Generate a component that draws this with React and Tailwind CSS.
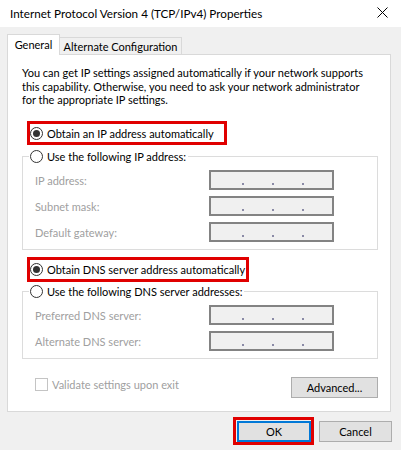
import React from "react";

function Radio({ checked }) {
  return (
    <span className="flex h-[13px] w-[13px] shrink-0 items-center justify-center rounded-full border border-[#333333] bg-white">
      {checked && <span className="h-[7px] w-[7px] rounded-full bg-[#333333]" />}
    </span>
  );
}

function IpBox() {
  return (
    <div className="relative h-[20px] w-[125px] border-2 border-[#838383] bg-[#f0f0f0]">
      <span className="absolute left-[31px] top-[11px] h-[2px] w-[2px] bg-[#8a8aa6]" />
      <span className="absolute left-[61px] top-[11px] h-[2px] w-[2px] bg-[#8a8aa6]" />
      <span className="absolute left-[91px] top-[11px] h-[2px] w-[2px] bg-[#8a8aa6]" />
    </div>
  );
}

function FieldRow({ label }) {
  return (
    <div className="flex h-[20px] items-center">
      <span className="w-[180px] whitespace-nowrap pl-[6px] text-[#a0a0a0]">{label}</span>
      <IpBox />
    </div>
  );
}

export default function App() {
  return (
    <div
      className="h-[450px] w-[401px] overflow-hidden whitespace-nowrap bg-[#f0f0f0] text-[11px] leading-[15px] text-black"
      style={{ fontFamily: 'Lato, "Noto Sans", sans-serif' }}
    >
      {/* Title bar */}
      <div className="flex h-[27px] items-center justify-between bg-white pl-[10px] pr-[13px]">
        <span className="text-[11.7px]">Internet Protocol Version 4 (TCP/IPv4) Properties</span>
        <svg width="11" height="11" viewBox="0 0 11 11" className="mb-[2px]">
          <path d="M0.5 0.5 L10.5 10.5 M10.5 0.5 L0.5 10.5" stroke="#000" strokeWidth="1" fill="none" />
        </svg>
      </div>

      {/* Tabs */}
      <div className="mt-[7px] flex items-end pl-[7px]">
        <div className="relative z-10 -mb-px flex h-[21px] w-[53px] items-center justify-center border border-b-0 border-[#d9d9d9] bg-white pb-[1px]">
          General
        </div>
        <div className="flex h-[17px] w-[122px] items-center justify-center border-r border-t border-[#d9d9d9] bg-[#f0f0f0]">
          Alternate Configuration
        </div>
      </div>

      {/* Panel */}
      <div className="ml-[7px] h-[358px] w-[384px] border border-[#d9d9d9] bg-white">
        <p className="ml-[14px] mt-[11px] h-[41px] leading-[13.5px]">
          You can get IP settings assigned automatically if your network supports
          <br />
          this capability. Otherwise, you need to ask your network administrator
          <br />
          for the appropriate IP settings.
        </p>

        <div className="ml-[19px] mt-[14px] flex h-[24px] w-[200px] items-center gap-[4px] border-[3px] border-[#e00000]">
          <Radio checked />
          <span>Obtain an IP address automatically</span>
        </div>

        <fieldset className="ml-[14px] mt-[4px] w-[356px] border border-[#dcdcdc] pb-[7px] pl-[6px]">
          <legend className="flex h-[15px] items-center gap-[4px] pl-[1px] pr-[2px]">
            <Radio />
            <span>Use the following IP address:</span>
          </legend>
          <div className="mt-[6px] flex flex-col gap-[6px]">
            <FieldRow label="IP address:" />
            <FieldRow label="Subnet mask:" />
            <FieldRow label="Default gateway:" />
          </div>
        </fieldset>

        <div className="ml-[19px] mt-[7px] flex h-[25px] w-[222px] items-center gap-[4px] border-[3px] border-[#e00000]">
          <Radio checked />
          <span>Obtain DNS server address automatically</span>
        </div>

        <fieldset className="ml-[14px] mt-[2px] w-[356px] border border-[#dcdcdc] pb-[7px] pl-[6px]">
          <legend className="flex h-[15px] items-center gap-[4px] pl-[1px] pr-[2px]">
            <Radio />
            <span>Use the following DNS server addresses:</span>
          </legend>
          <div className="mt-[6px] flex flex-col gap-[6px]">
            <FieldRow label="Preferred DNS server:" />
            <FieldRow label="Alternate DNS server:" />
          </div>
        </fieldset>

        <div className="mt-[18px] flex items-start justify-between pl-[27px] pr-[12px]">
          <div className="flex items-center gap-[4px]">
            <span className="h-[13px] w-[13px] border border-[#c4c4c4] bg-white" />
            <span className="text-[#a0a0a0]">Validate settings upon exit</span>
          </div>
          <button className="flex h-[21px] w-[87px] items-center justify-center border border-[#adadad] bg-[#e1e1e1]">
            Advanced...
          </button>
        </div>
      </div>

      {/* Bottom buttons */}
      <div className="mt-[5px] flex items-center justify-end gap-[5px] pr-[9px]">
        <div className="h-[28px] w-[81px] border-[3px] border-[#e00000] pl-[1px] pt-[1px]">
          <button className="flex h-[21px] w-[74px] items-center justify-center border-2 border-[#0078d7] bg-[#e1e1e1]">
            OK
          </button>
        </div>
        <button className="flex h-[21px] w-[73px] items-center justify-center border border-[#adadad] bg-[#e1e1e1]">
          Cancel
        </button>
      </div>
    </div>
  );
}
